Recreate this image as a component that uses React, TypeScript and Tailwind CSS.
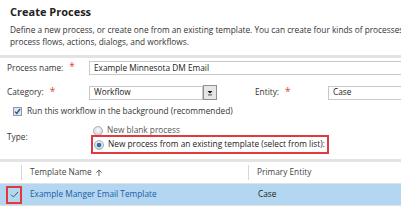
import React from "react";

function Asterisk() {
  return <span className="text-[#e2403a] ml-[6px] text-[10px] leading-none relative top-[-2px]">*</span>;
}

function Radio({ checked }: { checked?: boolean }) {
  return (
    <svg width="10" height="10" viewBox="0 0 10 10" className="shrink-0">
      <defs>
        <radialGradient id={checked ? "rg1" : "rg0"} cx="50%" cy="40%" r="60%">
          <stop offset="0%" stopColor="#ffffff" />
          <stop offset="100%" stopColor="#c9cdd2" />
        </radialGradient>
      </defs>
      <circle cx="5" cy="5" r="4.5" fill={`url(#${checked ? "rg1" : "rg0"})`} stroke="#9aa3ad" strokeWidth="0.8" />
      {checked && <circle cx="5" cy="5" r="2.3" fill="#2a6fb3" />}
    </svg>
  );
}

export default function App() {
  return (
    <div
      className="w-[401px] h-[217px] overflow-hidden bg-white text-[#333]"
      style={{ fontFamily: '"Open Sans", "Noto Sans", Arial, sans-serif' }}
    >
      {/* Header */}
      <div className="h-[55px] pl-[10px] pt-[5px] whitespace-nowrap">
        <div className="text-[11px] font-bold leading-[13px] text-[#222]">Create Process</div>
        <div className="mt-[6px] text-[8.3px] leading-[12px] text-[#333]">
          Define a new process, or create one from an existing template. You can create four kinds of processes:
          <br />
          process flows, actions, dialogs, and workflows.
        </div>
      </div>
      <div className="h-[3px] bg-[#e3e3e3]" />

      {/* Form */}
      <div className="pl-[7px] whitespace-nowrap text-[8.3px] text-[#333]">
        <div className="mt-[3px] flex items-center h-[14px]">
          <div className="w-[82px] shrink-0 flex items-center">
            Process name:
            <Asterisk />
          </div>
          <div className="w-[330px] shrink-0 h-[14px] border border-[#c8c8c8] pl-[4px] flex items-center text-[#222]">
            Example Minnesota DM Email
          </div>
        </div>

        <div className="mt-[10px] flex items-center h-[15px]">
          <div className="w-[82px] shrink-0 flex items-center">
            Category:
            <Asterisk />
          </div>
          <div className="w-[114px] shrink-0 h-[14px] border border-[#c8c8c8] pl-[4px] flex items-center text-[#222]">
            Workflow
          </div>
          <div className="w-[14px] h-[15px] shrink-0 border border-[#8f8f8f] bg-[#e6e6e6] flex flex-col items-center justify-center">
            <svg width="8" height="6" viewBox="0 0 8 6">
              <path d="M1.5 1 L6.5 1 L4 3.6 Z" fill="#111" />
              <rect x="2" y="4.4" width="4" height="1" fill="#555" />
            </svg>
          </div>
          <div className="ml-[38px] w-[73px] shrink-0 flex items-center">
            Entity:
            <Asterisk />
          </div>
          <div className="w-[90px] shrink-0 h-[14px] border border-[#c8c8c8] pl-[4px] flex items-center text-[#222]">
            Case
          </div>
        </div>

        <div className="mt-[7px] flex items-center h-[9px] pl-[6px]">
          <svg width="9" height="9" viewBox="0 0 9 9" className="shrink-0">
            <rect x="0.5" y="0.5" width="8" height="8" fill="#dfe6ee" stroke="#8e9bab" />
            <path d="M2 4.6 L3.8 6.4 L7 2" stroke="#2b4f87" strokeWidth="1.3" fill="none" />
          </svg>
          <span className="ml-[5px]">Run this workflow in the background (recommended)</span>
        </div>

        <div className="mt-[10px] flex">
          <div className="w-[84px] shrink-0 pt-[5px]">Type:</div>
          <div className="flex flex-col">
            <div className="flex items-center h-[9px] pl-[2px] text-[#555]">
              <Radio />
              <span className="ml-[4px]">New blank process</span>
            </div>
            <div className="w-[238px] h-[19px] border-2 border-[#e0393e] flex items-center pl-[1px]">
              <Radio checked />
              <span className="ml-[4px] text-[#222]">New process from an existing template (select from list):</span>
            </div>
          </div>
        </div>
      </div>

      <div className="mt-[5px] h-[3px] bg-[#e3e3e3]" />

      {/* Table */}
      <div className="whitespace-nowrap text-[8.3px]">
        <div className="h-[22px] flex items-center border-b border-[#e2e2e2] text-[#444]">
          <div className="w-[22px] h-[15px] shrink-0 border-r border-[#d6d6d6]" />
          <div className="w-[227px] shrink-0 h-[15px] border-r border-[#d6d6d6] pl-[8px] flex items-center">
            Template Name
            <svg width="8" height="8" viewBox="0 0 8 8" className="ml-[3px]">
              <path d="M4 7 V1 M1.3 3.6 L4 1 L6.7 3.6" stroke="#555" strokeWidth="0.9" fill="none" />
            </svg>
          </div>
          <div className="pl-[8px]">Primary Entity</div>
        </div>
        <div className="h-[22px] flex items-center bg-[#b3d7f1] border-b border-[#e2e2e2]">
          <div className="w-[22px] shrink-0 flex items-center justify-start pl-[6px]">
            <div className="w-[17px] h-[18px] border-2 border-[#e0393e] flex items-center justify-center">
              <svg width="9" height="7" viewBox="0 0 9 7">
                <path d="M1 3.6 L3.4 6 L8 1" stroke="#555" strokeWidth="1" fill="none" />
              </svg>
            </div>
          </div>
          <div className="w-[227px] shrink-0 pl-[8px] text-[#1e5aa6]">Example Manger Email Template</div>
          <div className="pl-[9px] text-[#222]">Case</div>
        </div>
      </div>
    </div>
  );
}
